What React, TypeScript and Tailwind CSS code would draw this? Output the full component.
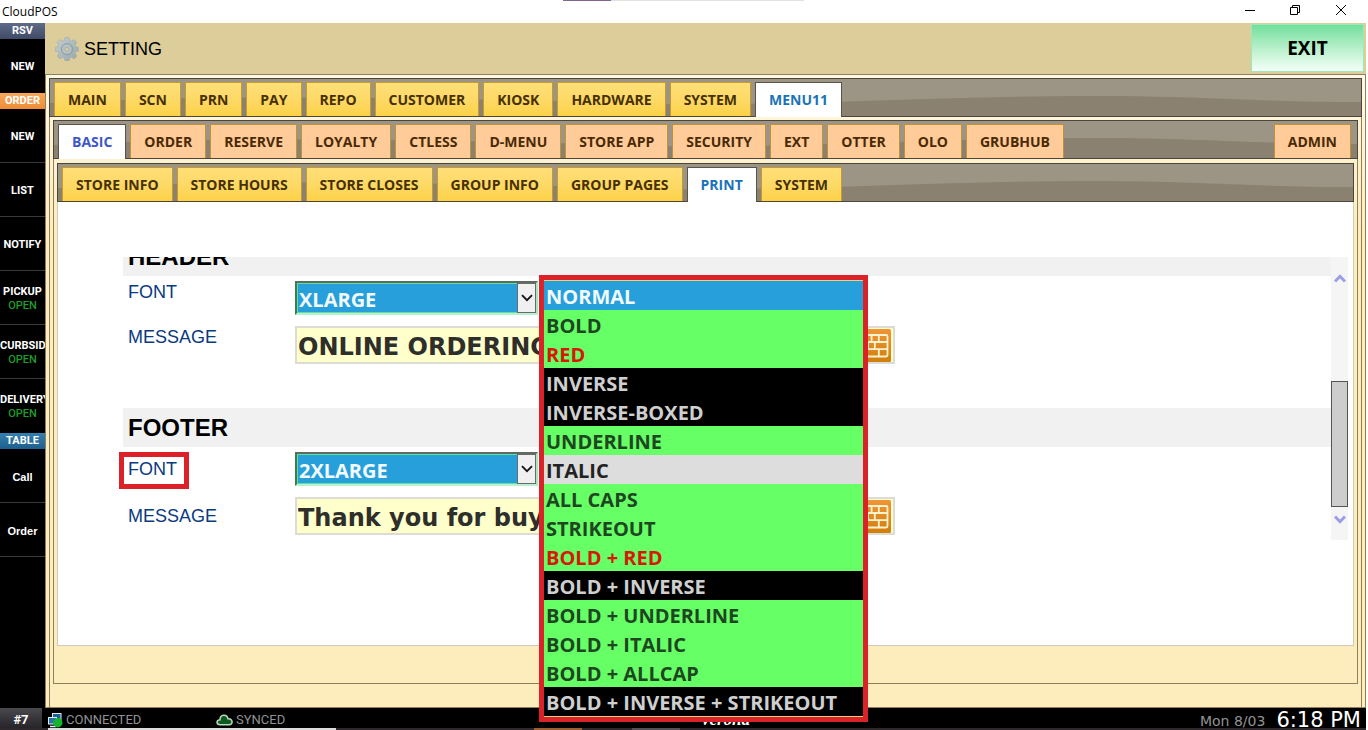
import React from "react";

type Tab = { label: string; active?: boolean };

const mainTabs: Tab[] = [
  { label: "MAIN" },
  { label: "SCN" },
  { label: "PRN" },
  { label: "PAY" },
  { label: "REPO" },
  { label: "CUSTOMER" },
  { label: "KIOSK" },
  { label: "HARDWARE" },
  { label: "SYSTEM" },
  { label: "MENU11", active: true },
];

const menuTabs: Tab[] = [
  { label: "BASIC", active: true },
  { label: "ORDER" },
  { label: "RESERVE" },
  { label: "LOYALTY" },
  { label: "CTLESS" },
  { label: "D-MENU" },
  { label: "STORE APP" },
  { label: "SECURITY" },
  { label: "EXT" },
  { label: "OTTER" },
  { label: "OLO" },
  { label: "GRUBHUB" },
];

const basicTabs: Tab[] = [
  { label: "STORE INFO" },
  { label: "STORE HOURS" },
  { label: "STORE CLOSES" },
  { label: "GROUP INFO" },
  { label: "GROUP PAGES" },
  { label: "PRINT", active: true },
  { label: "SYSTEM" },
];

const tones = {
  green: "bg-[#66ff66] text-[#1e4620]",
  red: "bg-[#66ff66] text-[#d81808]",
  black: "bg-black text-[#cfcfcf]",
  blue: "bg-[#279fda] text-[#f0faff]",
  gray: "bg-[#dddddd] text-[#222222]",
};

const styleOptions: { label: string; tone: keyof typeof tones }[] = [
  { label: "NORMAL", tone: "blue" },
  { label: "BOLD", tone: "green" },
  { label: "RED", tone: "red" },
  { label: "INVERSE", tone: "black" },
  { label: "INVERSE-BOXED", tone: "black" },
  { label: "UNDERLINE", tone: "green" },
  { label: "ITALIC", tone: "gray" },
  { label: "ALL CAPS", tone: "green" },
  { label: "STRIKEOUT", tone: "green" },
  { label: "BOLD + RED", tone: "red" },
  { label: "BOLD + INVERSE", tone: "black" },
  { label: "BOLD + UNDERLINE", tone: "green" },
  { label: "BOLD + ITALIC", tone: "green" },
  { label: "BOLD + ALLCAP", tone: "green" },
  { label: "BOLD + INVERSE + STRIKEOUT", tone: "black" },
];

function TabButton({ tab, peach }: { tab: Tab; peach?: boolean }) {
  const base = "shrink-0 whitespace-nowrap border border-b-0 px-[13px] text-[14px] font-bold";
  const look = tab.active
    ? `relative -mb-px h-[35px] pb-[2px] border-[#5a5348] bg-white ${peach ? "text-[#3f57c8]" : "text-[#1a73b8]"}`
    : peach
      ? "h-[34px] border-[#c0933a] bg-[#ffcb99] text-[#4a2a05]"
      : "h-[34px] border-[#c79a2c] bg-linear-to-b from-[#ffdf78] via-[#fdd966] to-[#fdd246] text-[#463004]";
  return (
    <button type="button" className={`${base} ${look}`}>
      {tab.label}
    </button>
  );
}

function TabBar({ tabs, peach, extra }: { tabs: Tab[]; peach?: boolean; extra?: Tab }) {
  return (
    <nav className="relative flex h-[39px] shrink-0 items-end border border-[#4b453b] bg-[#9c9484] pr-[6px] pl-[4px] font-['Open_Sans','Noto_Sans',sans-serif]">
      <svg className="absolute inset-0 h-full w-full" viewBox="0 0 1300 37" preserveAspectRatio="none" aria-hidden="true">
        <path d="M0 24 C150 16 350 17 600 25 C750 27 880 17 1040 17 C1140 17 1200 23 1300 23 V37 H0Z" fill="#8a8170" />
      </svg>
      <div className="relative flex min-w-0 flex-1 items-end gap-[4px]">
        {tabs.map((t) => (
          <TabButton key={t.label} tab={t} peach={peach} />
        ))}
      </div>
      {extra && (
        <div className="relative flex items-end">
          <TabButton tab={extra} peach={peach} />
        </div>
      )}
    </nav>
  );
}

function SideBand({ label, look }: { label: string; look: string }) {
  return (
    <h2 className={`h-[16px] shrink-0 text-center text-[11px] leading-[16px] font-bold text-white ${look}`}>{label}</h2>
  );
}

function SideItem({ label, open, last }: { label: string; open?: boolean; last?: boolean }) {
  return (
    <button
      type="button"
      className={`block h-[54px] w-full shrink-0 overflow-hidden pt-[2px] text-center text-[11px] leading-[14px] font-bold whitespace-nowrap text-white ${last ? "" : "border-b border-[#3a3a3a]"}`}
    >
      {label}
      {open && <span className="block font-medium text-[#1f9c2a]">OPEN</span>}
    </button>
  );
}

function KeyboardIcon() {
  return (
    <svg viewBox="0 0 33 33" className="h-[33px] w-[33px]" aria-hidden="true">
      <defs>
        <linearGradient id="kb" x1="0" y1="0" x2="0" y2="1">
          <stop offset="0" stopColor="#ef9638" />
          <stop offset="1" stopColor="#cf7f0c" />
        </linearGradient>
      </defs>
      <rect width="33" height="33" rx="1.500" fill="url(#kb)" />
      <rect x="3.500" y="6" width="26" height="21.500" rx="1.500" fill="none" stroke="#fff3cf" strokeWidth="1.800" />
      <path
        d="M4 13H29M4 20.200H29M8 6V13M13.600 6V13M20.800 6V13M10 13V20M16.800 13V20M8 20V27M20.800 20V27"
        stroke="#fff3cf"
        strokeWidth="1.800"
        fill="none"
      />
    </svg>
  );
}

function FontSelect({ id, value }: { id: string; value: string }) {
  return (
    <div className="relative h-[34px] w-[243px] border-2 border-t-[#5f6b5f] border-r-[#a8e8c0] border-b-[#b8f0d0] border-l-[#3f7a52] bg-[#279fda]">
      <select
        id={id}
        defaultValue={value}
        className="h-[30px] w-full appearance-none border border-[#5fe0a0] bg-[#279fda] pt-[4px] pl-px font-['Open_Sans','Noto_Sans',sans-serif] text-[20px] leading-[24px] font-bold text-[#f0faff]"
      >
        <option>{value}</option>
      </select>
      <span className="pointer-events-none absolute top-0 right-0 flex h-[30px] w-[19px] items-center justify-center border border-[#6a6a6a] bg-[#f0f0f0]">
        <svg viewBox="0 0 12 8" className="h-[8px] w-[12px]" aria-hidden="true">
          <path d="M1 1.200L6 6.200L11 1.200" stroke="#111" strokeWidth="1.800" fill="none" />
        </svg>
      </span>
    </div>
  );
}

function MessageField({ id, value }: { id: string; value: string }) {
  return (
    <div className="flex h-[38px] w-[600px] items-center border-2 border-[#dcdcd4] bg-[#ffffcc]">
      <input
        id={id}
        defaultValue={value}
        className="h-[34px] min-w-0 flex-1 bg-transparent pt-[3px] pl-px font-['DejaVu_Sans',sans-serif] text-[24px] leading-[31px] font-bold text-[#2e2e2a] outline-none"
      />
      <button type="button" aria-label="Open keyboard" className="mr-[2px]">
        <KeyboardIcon />
      </button>
    </div>
  );
}

function Section({
  title,
  id,
  font,
  message,
  marked,
}: {
  title: string;
  id: string;
  font: string;
  message: string;
  marked?: boolean;
}) {
  const align = marked ? "items-center" : "items-start";
  return (
    <section>
      <h3 className="h-[39px] bg-[#f1f1f1] pl-[5px] text-[24px] leading-[39px] font-bold text-black">{title}</h3>
      <div className={`mt-[5px] flex h-[34px] text-[18px] leading-[22px] text-[#0a3a80] ${align}`}>
        <div className="relative w-[172px] shrink-0 pl-[5px]">
          <label htmlFor={`${id}-font`}>FONT</label>
          {marked && <div className="absolute -top-[6px] -left-[4px] h-[37px] w-[70px] border-[5px] border-[#dc2229]" />}
        </div>
        <FontSelect id={`${id}-font`} value={font} />
      </div>
      <div className={`mt-[11px] flex h-[38px] text-[18px] leading-[22px] text-[#0a3a80] ${align}`}>
        <label htmlFor={`${id}-message`} className="w-[172px] shrink-0 pl-[5px]">
          MESSAGE
        </label>
        <MessageField id={`${id}-message`} value={message} />
      </div>
    </section>
  );
}

function StyleMenu() {
  return (
    <ul
      role="listbox"
      aria-label="Print style"
      className="absolute top-[275px] left-[539px] w-[329px] border-[5px] border-[#dc2229] bg-[#e8d27a] py-px font-['Open_Sans','Noto_Sans',sans-serif] text-[20px] leading-[31px] font-bold"
    >
      {styleOptions.map((o) => (
        <li
          key={o.label}
          role="option"
          aria-selected={o.tone === "blue"}
          className={`h-[29px] pl-[2px] whitespace-nowrap ${tones[o.tone]}`}
        >
          {o.label}
        </li>
      ))}
    </ul>
  );
}

function GearIcon() {
  return (
    <svg viewBox="0 0 24 24" className="h-[24px] w-[24px]" aria-hidden="true">
      <defs>
        <linearGradient id="gear" x1="0" y1="0" x2="1" y2="1">
          <stop offset="0" stopColor="#c3cfd2" />
          <stop offset="1" stopColor="#98a6a8" />
        </linearGradient>
      </defs>
      <path
        d="M9.900 .5h4.200l.6 3.100 1.700.7 2.600-1.800 2.900 2.900-1.800 2.600.7 1.700 2.700.6v3.900l-2.700.6-.7 1.700 1.800 2.600-2.900 2.900-2.600-1.800-1.700.7-.6 3.100H9.900l-.6-3.100-1.700-.7-2.600 1.800-2.900-2.900 1.800-2.600-.7-1.700-2.700-.6v-3.900l2.700-.6.7-1.700-1.800-2.600L5 2.500l2.600 1.800 1.700-.7z"
        fill="url(#gear)"
        stroke="#98a6a8"
        strokeWidth="0.500"
      />
      <circle cx="12" cy="12.200" r="5.600" fill="none" stroke="#8d9da2" strokeWidth="1" />
      <circle cx="12" cy="12.200" r="4.200" fill="#b7c4c6" />
      <circle cx="12" cy="12.200" r="2" fill="#dccd9a" stroke="#9caaab" strokeWidth="0.800" />
    </svg>
  );
}

function Scrollbar() {
  return (
    <div className="flex w-[17px] shrink-0 flex-col items-center bg-[#f5f5f5] pt-[17px] pb-[16px]">
      <button type="button" aria-label="Scroll up">
        <svg viewBox="0 0 12 9" className="h-[9px] w-[12px]" aria-hidden="true">
          <path d="M1 7.500L6 2.300L11 7.500" stroke="#9c9ce8" strokeWidth="3" fill="none" />
        </svg>
      </button>
      <div className="mt-[98px] h-[126px] w-full border border-[#555] bg-[#cdcdcd]" />
      <button type="button" aria-label="Scroll down" className="mt-auto">
        <svg viewBox="0 0 12 9" className="h-[9px] w-[12px]" aria-hidden="true">
          <path d="M1 1.500L6 6.700L11 1.500" stroke="#9c9ce8" strokeWidth="3" fill="none" />
        </svg>
      </button>
    </div>
  );
}

export default function App() {
  return (
    <div className="relative flex min-h-screen flex-col bg-white pr-[2px] font-['Liberation_Sans',Arial,sans-serif]">
      <header className="relative flex h-[23px] shrink-0 items-start bg-white pl-[2px] font-['Open_Sans','Noto_Sans',sans-serif] text-[12px] text-black">
        <h1 className="flex-1 leading-[24px]">CloudPOS</h1>
        <div className="absolute top-0 left-[563px] flex h-px w-[241px] bg-[#e2e2e2]">
          <div className="w-[48px] bg-[#7f6590]" />
        </div>
        <div className="flex items-center pt-[4px] pr-[19px]">
          <button type="button" aria-label="Minimize" className="w-[45px]">
            <svg viewBox="0 0 12 12" className="h-[12px] w-[12px]">
              <path d="M1 6.500H11" stroke="#000" />
            </svg>
          </button>
          <button type="button" aria-label="Restore" className="w-[46px]">
            <svg viewBox="0 0 12 12" className="h-[12px] w-[12px]">
              <path d="M1.500 3.500H8.500V10.500H1.500ZM3.500 3.500V1.500H10.500V8.500H8.500" stroke="#000" fill="none" />
            </svg>
          </button>
          <button type="button" aria-label="Close">
            <svg viewBox="0 0 12 12" className="h-[12px] w-[12px]">
              <path d="M1 1L11 11M11 1L1 11" stroke="#000" />
            </svg>
          </button>
        </div>
      </header>

      <div className="flex flex-1">
        <aside className="flex w-[45px] shrink-0 flex-col bg-black font-['Roboto',sans-serif]">
          <SideBand label="RSV" look="bg-linear-to-b from-[#5f6b88] to-[#3f4a66]" />
          <SideItem label="NEW" last />
          <SideBand label="ORDER" look="bg-linear-to-b from-[#f7a85a] to-[#ee8c35]" />
          <SideItem label="NEW" />
          <SideItem label="LIST" />
          <SideItem label="NOTIFY" />
          <SideItem label="PICKUP" open />
          <SideItem label="CURBSIDE" open />
          <SideItem label="DELIVERY" open last />
          <SideBand label="TABLE" look="bg-linear-to-b from-[#3580b0] to-[#1d5f8e]" />
          <div className="font-['Liberation_Sans',Arial,sans-serif]">
            <SideItem label="Call" />
            <SideItem label="Order" />
          </div>
        </aside>

        <main className="flex min-w-0 flex-1 flex-col">
          <div className="flex h-[51px] shrink-0 items-center bg-[#dccd9a] pr-[2px] pl-[10px]">
            <GearIcon />
            <h2 className="flex-1 pt-[2px] pl-[5px] text-[18px] text-black">SETTING</h2>
            <button
              type="button"
              className="mt-px h-[48px] w-[113px] self-start border border-[#9fe8b8] bg-linear-to-b from-[#6fdf9c] to-[#f4fff8] font-['Open_Sans','Noto_Sans',sans-serif] text-[19px] font-bold text-black"
            >
              EXIT
            </button>
          </div>

          <div className="flex flex-1 flex-col border border-[#8f7f5a] bg-linear-to-b from-[#fff8e4] to-[#fdecbc] to-[25%] px-[3px] pt-[3px]">
            <TabBar tabs={mainTabs} />
            <div className="flex flex-1 flex-col border-x border-[#8f7f5a] px-[3px] pt-[3px] pb-[23px]">
              <TabBar tabs={menuTabs} peach extra={{ label: "ADMIN" }} />
              <div className="flex flex-1 flex-col border border-t-0 border-[#8f7f5a] px-[3px] pt-[4px] pb-[37px]">
                <TabBar tabs={basicTabs} />
                <div className="flex flex-1 flex-col border border-t-0 border-[#cfcabd] bg-white pt-[55px] pr-[5px] pl-[61px]">
                  <div className="flex h-[283px]">
                    <div className="flex-1 overflow-hidden pl-[4px]">
                      <div className="-mt-[20px] flex flex-col gap-[44px]">
                        <Section title="HEADER" id="header" font="XLARGE" message="ONLINE ORDERING" />
                        <Section title="FOOTER" id="footer" font="2XLARGE" message="Thank you for buying" marked />
                      </div>
                    </div>
                    <Scrollbar />
                  </div>
                </div>
              </div>
            </div>
          </div>
        </main>
      </div>

      <footer className="flex h-[20px] shrink-0 items-center bg-black font-['Roboto',sans-serif] text-[13px] text-[#929292]">
        <div className="h-full w-[42px] bg-linear-to-b from-[#4a4a4e] to-[#26262a] text-center leading-[23px] font-bold text-white">
          #7
        </div>
        <div className="flex h-full w-[174px] items-center gap-[3px] pt-[4px] pl-[5px]">
          <svg viewBox="0 0 16 16" className="h-[16px] w-[16px]" aria-hidden="true">
            <rect x="5.500" y="1.500" width="8.500" height="7" fill="#1f5f98" stroke="#e4edf4" />
            <rect x="1.500" y="5.500" width="8" height="6.500" fill="#2a6fae" stroke="#e4edf4" />
            <path d="M3 14.500H9" stroke="#e4edf4" strokeWidth="1.500" />
            <circle cx="10.800" cy="10.800" r="4.700" fill="#12b52c" />
          </svg>
          <span>CONNECTED</span>
        </div>
        <div className="flex h-full w-[484px] items-center gap-[3px] pt-[4px]">
          <svg viewBox="0 0 17 12" className="h-[12px] w-[17px]" aria-hidden="true">
            <path
              d="M4.200 10.800C0 10.800 0 5.800 4 5.800C4 0 11 0 12 4.800C17 4.500 17.500 10.800 13 10.800Z"
              fill="#0f5a1e"
              stroke="#b9d6bd"
              strokeWidth="1.500"
            />
          </svg>
          <span>SYNCED</span>
        </div>
        <div className="flex-1 pt-[4px] font-['Liberation_Serif',serif] text-[17px] font-bold text-white italic">
          Verona
        </div>
        <div className="flex items-center gap-[11px] pr-[5px] font-['DejaVu_Sans',sans-serif]">
          <span className="pt-[5px] text-[14px] leading-[20px]">Mon 8/03</span>
          <span className="pt-[4px] text-[21px] leading-[20px] text-white">6:18 PM</span>
        </div>
      </footer>
      <div className="flex h-[2px] shrink-0 bg-[#2e282c]">
        <div className="ml-[48px] w-[288px] bg-[#dcdcdc]" />
        <div className="ml-[198px] w-[48px] bg-[#9a5f34]" />
        <div className="ml-[50px] w-[48px] bg-[#555055]" />
      </div>

      <StyleMenu />
    </div>
  );
}
